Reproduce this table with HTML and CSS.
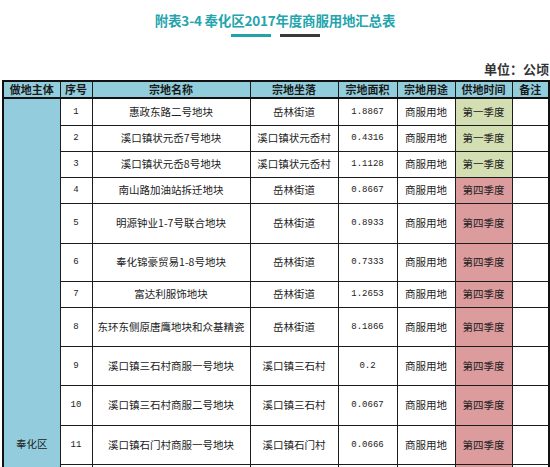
FILE: index.html
```html
<!DOCTYPE html>
<html lang="zh-CN">
<head>
<meta charset="utf-8">
<title>附表3-4 奉化区2017年度商服用地汇总表</title>
<link rel="stylesheet" href="styles.css">
</head>
<body>
<header class="title-block">
  <h1 class="title">附表3-4 奉化区2017年度商服用地汇总表</h1>
  <div class="bars"><span class="bar bar-teal"></span><span class="bar bar-dark"></span></div>
</header>
<div class="unit">单位：公顷</div>
<table class="sheet">
  <colgroup>
    <col class="c1"><col class="c2"><col class="c3"><col class="c4"><col class="c5"><col class="c6"><col class="c7"><col class="c8">
  </colgroup>
  <thead>
    <tr class="h-row">
      <th>做地主体</th><th>序号</th><th>宗地名称</th><th>宗地坐落</th><th>宗地面积</th><th>宗地用途</th><th>供地时间</th><th>备注</th>
    </tr>
  </thead>
  <tbody>
    <tr class="r27">
      <td class="owner" rowspan="12">奉化区</td>
      <td class="num">1</td><td>惠政东路二号地块</td><td>岳林街道</td><td class="num">1.8867</td><td>商服用地</td><td class="q1">第一季度</td><td></td>
    </tr>
    <tr class="r26"><td class="num">2</td><td>溪口镇状元岙7号地块</td><td>溪口镇状元岙村</td><td class="num">0.4316</td><td>商服用地</td><td class="q1">第一季度</td><td></td></tr>
    <tr class="r26"><td class="num">3</td><td>溪口镇状元岙8号地块</td><td>溪口镇状元岙村</td><td class="num">1.1128</td><td>商服用地</td><td class="q1">第一季度</td><td></td></tr>
    <tr class="r26"><td class="num">4</td><td>南山路加油站拆迁地块</td><td>岳林街道</td><td class="num">0.8667</td><td>商服用地</td><td class="q4">第四季度</td><td></td></tr>
    <tr class="r40"><td class="num">5</td><td>明源钟业1-7号联合地块</td><td>岳林街道</td><td class="num">0.8933</td><td>商服用地</td><td class="q4">第四季度</td><td></td></tr>
    <tr class="r38"><td class="num">6</td><td>奉化锦豪贸易1-8号地块</td><td>岳林街道</td><td class="num">0.7333</td><td>商服用地</td><td class="q4">第四季度</td><td></td></tr>
    <tr class="r26"><td class="num">7</td><td>富达利服饰地块</td><td>岳林街道</td><td class="num">1.2653</td><td>商服用地</td><td class="q4">第四季度</td><td></td></tr>
    <tr class="r39"><td class="num">8</td><td>东环东侧原唐鹰地块和众基精瓷</td><td>岳林街道</td><td class="num">8.1866</td><td>商服用地</td><td class="q4">第四季度</td><td></td></tr>
    <tr class="r39"><td class="num">9</td><td>溪口镇三石村商服一号地块</td><td>溪口镇三石村</td><td class="num">0.2</td><td>商服用地</td><td class="q4">第四季度</td><td></td></tr>
    <tr class="r40"><td class="num">10</td><td>溪口镇三石村商服二号地块</td><td>溪口镇三石村</td><td class="num">0.0667</td><td>商服用地</td><td class="q4">第四季度</td><td></td></tr>
    <tr class="r39"><td class="num">11</td><td>溪口镇石门村商服一号地块</td><td>溪口镇石门村</td><td class="num">0.0666</td><td>商服用地</td><td class="q4">第四季度</td><td></td></tr>
    <tr class="r-rest"><td class="num"></td><td></td><td></td><td class="num"></td><td></td><td class="q4"></td><td></td></tr>
  </tbody>
</table>
</body>
</html>
```
FILE: styles.css
```css
html, body {
  margin: 0;
  padding: 0;
  background: #ffffff;
}
body {
  font-family: "Noto Sans CJK SC", "Noto Sans", sans-serif;
  color: #222;
}
.title-block {
  padding-top: 11px;
  text-align: center;
}
.title {
  margin: 0;
  font-size: 13.5px;
  line-height: 18px;
  font-weight: 700;
  color: #24a4ad;
  letter-spacing: -0.2px;
}
.bars {
  display: flex;
  justify-content: center;
  gap: 9px;
  margin-top: 5px;
  padding-left: 0;
}
.bar {
  display: block;
  width: 40px;
  height: 3px;
}
.bar-teal { background: #22a3ac; }
.bar-dark { background: #3a3a3a; }
.unit {
  margin-top: 24px;
  text-align: right;
  padding-right: 1px;
  font-size: 13px;
  line-height: 16px;
  font-weight: 700;
  color: #333;
}
.sheet {
  margin: 3px 0 0 2px;
  width: 546px;
  table-layout: fixed;
  border-collapse: collapse;
  border: 2px solid #111;
}
.c1 { width: 57px; }
.c2 { width: 32px; }
.c3 { width: 158px; }
.c4 { width: 88px; }
.c5 { width: 59px; }
.c6 { width: 58px; }
.c7 { width: 57px; }
.c8 { width: 37px; }
.sheet th, .sheet td {
  border: 1px solid #1c1c1c;
  padding: 0;
  text-align: center;
  vertical-align: middle;
  white-space: nowrap;
  overflow: hidden;
}
.sheet th {
  background: #92cddc;
  font-size: 11px;
  line-height: 13px;
  font-weight: 700;
  color: #1a1a1a;
  border-bottom: 2px solid #111;
}
.h-row { height: 17px; }
.sheet td {
  font-size: 10.5px;
  line-height: 12px;
  color: #222;
}
.sheet td.num {
  font-family: "Liberation Mono", "DejaVu Sans Mono", monospace;
  font-size: 9px;
}
.sheet td.owner {
  background: #93cddd;
  font-size: 10.5px;
}
.sheet td.q1 { background: #d3dfb2; }
.sheet td.q4 { background: #dc9c9e; }
.r26 { height: 26px; }
.r27 { height: 27px; }
.r38 { height: 38px; }
.r39 { height: 39px; }
.r40 { height: 40px; }
.r-rest { height: 326px; }
```
